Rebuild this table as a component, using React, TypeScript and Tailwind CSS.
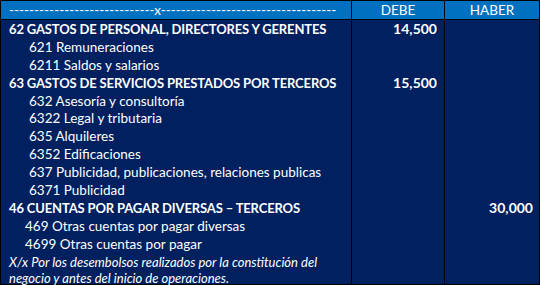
import React from 'react';

type Row = {
  label: string;
  level: 0 | 1 | 2;
  debe?: string;
  haber?: string;
};

const rows: Row[] = [
  { label: '62 GASTOS DE PERSONAL, DIRECTORES Y GERENTES', level: 0, debe: '14,500' },
  { label: '621 Remuneraciones', level: 1 },
  { label: '6211 Saldos y salarios', level: 1 },
  { label: '63 GASTOS DE SERVICIOS PRESTADOS POR TERCEROS', level: 0, debe: '15,500' },
  { label: '632 Asesoría y consultoría', level: 1 },
  { label: '6322 Legal y tributaria', level: 1 },
  { label: '635 Alquileres', level: 1 },
  { label: '6352 Edificaciones', level: 1 },
  { label: '637 Publicidad, publicaciones, relaciones publicas', level: 1 },
  { label: '6371 Publicidad', level: 1 },
  { label: '46 CUENTAS POR PAGAR DIVERSAS – TERCEROS', level: 0, haber: '30,000' },
  { label: '469 Otras cuentas por pagar diversas', level: 2 },
  { label: '4699 Otras cuentas por pagar', level: 2 },
];

export default function App() {
  return (
    <div
      className="w-[540px] h-[285px] bg-[#002060] text-white border border-black flex flex-col"
      style={{ fontFamily: 'Lato, "Open Sans", sans-serif' }}
    >
      <div className="grid grid-cols-[350px_93px_1fr] h-[19px] bg-[#0070c0] border-b border-black text-[13.5px] leading-[18px]">
        <div className="pl-2 overflow-hidden whitespace-nowrap">
          {'-'.repeat(29)}x{'-'.repeat(35)}
        </div>
        <div className="border-l border-black text-center">DEBE</div>
        <div className="border-l border-black text-center">HABER</div>
      </div>

      <div className="flex-1 flex flex-col">
        {rows.map((r) => (
          <div
            key={r.label}
            className="grid grid-cols-[350px_93px_1fr] h-[17.9px] leading-[18px]"
          >
            <div
              className={
                r.level === 0
                  ? 'pl-2 font-bold text-[13px] tracking-[-0.15px] whitespace-nowrap'
                  : r.level === 1
                  ? 'pl-7 text-[13.5px] whitespace-nowrap'
                  : 'pl-6 text-[13.5px] whitespace-nowrap'
              }
            >
              {r.label}
            </div>
            <div className="border-l border-black text-right pr-[7px] font-bold text-[14px]">{r.debe}</div>
            <div className="border-l border-black text-right pr-[6px] font-bold text-[14px]">{r.haber}</div>
          </div>
        ))}
        <div className="grid grid-cols-[350px_93px_1fr] flex-1">
          <div className="pl-2 pt-px italic text-[13px] leading-[16px] whitespace-nowrap">
            X/x Por los desembolsos realizados por la constitución del
            <br />
            negocio y antes del inicio de operaciones.
          </div>
          <div className="border-l border-black" />
          <div className="border-l border-black" />
        </div>
      </div>
    </div>
  );
}
